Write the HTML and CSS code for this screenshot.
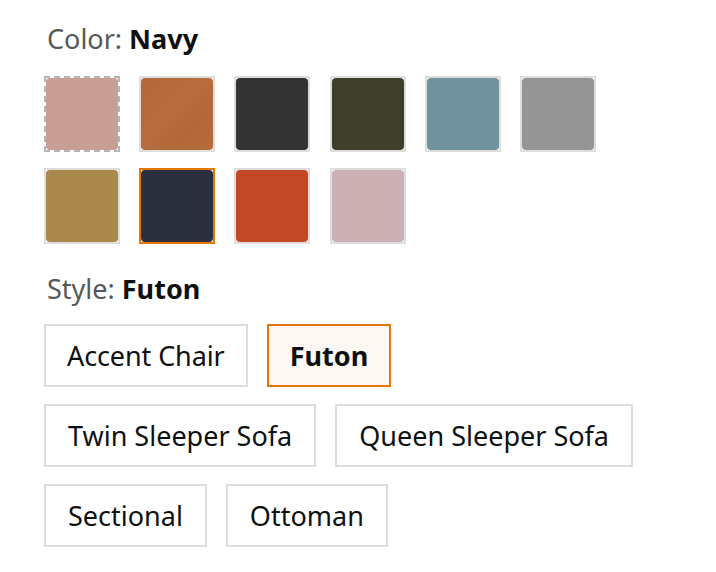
FILE: index.html
```html
<!DOCTYPE html>
<html>
<head>
<meta charset="utf-8">
<link rel="stylesheet" href="styles.css">
</head>
<body>
<div class="variations">
  <div class="label">Color: <b>Navy</b></div>
  <div class="swatches">
    <div class="swatch dashed"><span class="fill c-rose"></span></div>
    <div class="swatch"><span class="fill c-caramel"></span></div>
    <div class="swatch"><span class="fill c-charcoal"></span></div>
    <div class="swatch"><span class="fill c-olive"></span></div>
    <div class="swatch"><span class="fill c-teal"></span></div>
    <div class="swatch"><span class="fill c-grey"></span></div>
    <div class="swatch"><span class="fill c-mustard"></span></div>
    <div class="swatch selected"><span class="fill c-navy"></span></div>
    <div class="swatch"><span class="fill c-rust"></span></div>
    <div class="swatch"><span class="fill c-blush"></span></div>
  </div>
  <div class="label style-label">Style: <b>Futon</b></div>
  <div class="options">
    <div class="option compact">Accent Chair</div>
    <div class="option selected">Futon</div>
    <div class="option">Twin Sleeper Sofa</div>
    <div class="option">Queen Sleeper Sofa</div>
    <div class="option">Sectional</div>
    <div class="option">Ottoman</div>
  </div>
</div>
</body>
</html>
```
FILE: styles.css
```css
html, body {
  margin: 0;
  padding: 0;
  background: #ffffff;
}
body {
  font-family: "Noto Sans", "Open Sans", sans-serif;
  color: #0f1111;
}
.variations {
  padding: 21px 0 0 44px;
  width: 610px;
}
.label {
  font-size: 27px;
  line-height: 36px;
  color: #565959;
  margin-left: 3px;
}
.label b {
  color: #0f1111;
  font-weight: 700;
}
.swatches {
  display: grid;
  grid-template-columns: repeat(6, 76px);
  grid-auto-rows: 76px;
  column-gap: 19.2px;
  row-gap: 16px;
  margin-top: 19px;
}
.swatch {
  box-sizing: border-box;
  width: 76px;
  height: 76px;
  border: 2px solid #dddddd;
  background: #ffffff;
  display: flex;
}
.swatch.dashed {
  border: 2px dashed #b5b5b5;
}
.swatch.selected {
  border-color: #e77600;
}
.fill {
  flex: 1;
  border-radius: 4px;
}
.c-rose { background: #c89f95; }
.c-caramel { background: linear-gradient(135deg, #b4693b 0%, #b86d3f 45%, #b3683a 70%, #b76c3e 100%); }
.c-charcoal { background: #333333; }
.c-olive { background: #3f3f2b; }
.c-teal { background: #71939d; }
.c-grey { background: #959595; }
.c-mustard { background: #a9884c; }
.c-navy { background: #2b2f3e; }
.c-rust { background: #c24826; }
.c-blush { background: #ccb0b4; }
.style-label {
  margin-top: 27px;
}
.options {
  display: flex;
  flex-wrap: wrap;
  column-gap: 19px;
  row-gap: 17px;
  margin-top: 17px;
}
.option {
  box-sizing: border-box;
  height: 63px;
  border: 2px solid #dddddd;
  padding: 0 22px;
  font-size: 27px;
  line-height: 59px;
  color: #0f1111;
  white-space: nowrap;
}
.option.compact {
  padding: 0 21px;
  letter-spacing: -0.1px;
}
.option.selected {
  border-color: #e77600;
  background: #fdf8f3;
  font-weight: 700;
  padding: 0 21px;
}
```
